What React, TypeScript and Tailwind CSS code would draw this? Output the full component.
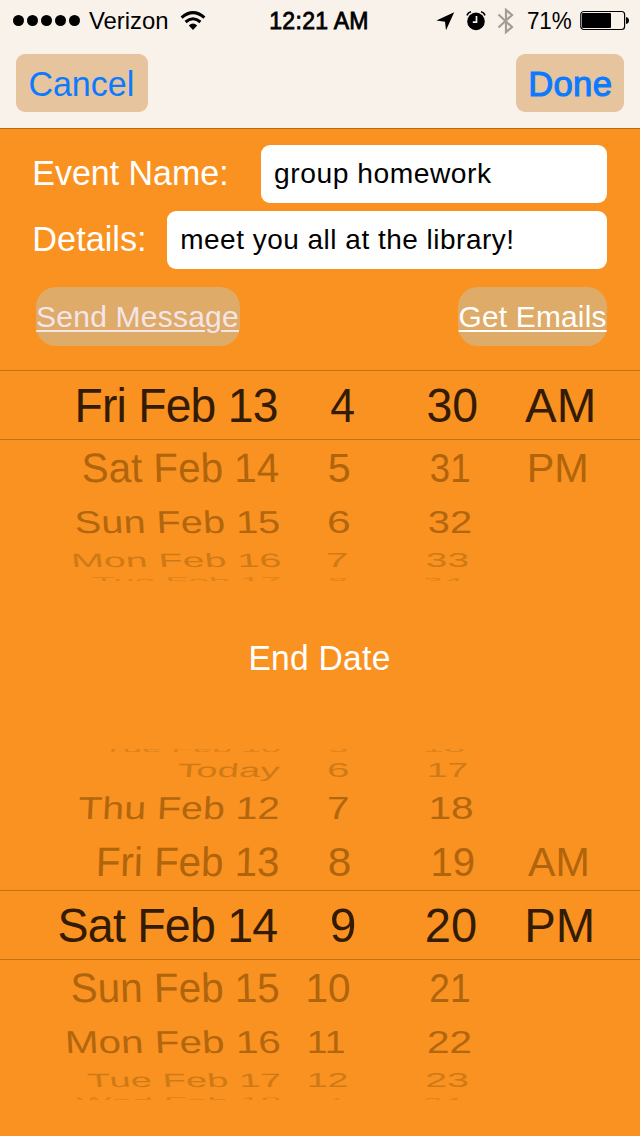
import React from 'react';

type FitProps = {
  text: string;
  width: number;
  size: number;
  scaleY?: number;
  skew?: number;
  tracking?: number;
  className?: string;
};

type Cell = [text: string, left: number, width: number];

type WheelRow = { depth: number; cells: Cell[] };

const FAMILY = '"Liberation Sans", Arial, sans-serif';

// Measuring at a larger size avoids whole-pixel rounding of the glyph bounds
const MEASURE = 10;

const ctx = document.createElement('canvas').getContext('2d')!;

// Condenses or widens a line of text so its glyphs span exactly `width`
function Fit({ text, width, size, scaleY = 1, skew = 0, tracking = 0, className = '' }: FitProps) {
  ctx.font = `${size * MEASURE}px ${FAMILY}`;
  ctx.letterSpacing = `${tracking * MEASURE}px`;
  const m = ctx.measureText(text);
  const inkLeft = m.actualBoundingBoxLeft / MEASURE;
  const inkRight = m.actualBoundingBoxRight / MEASURE;
  const sx = width / (inkLeft + inkRight);
  return (
    <span className="block shrink-0 whitespace-nowrap" style={{ width }}>
      <span
        className={`block w-max origin-left ${className}`}
        style={{
          fontSize: size,
          letterSpacing: tracking,
          transform: `translateX(${inkLeft * sx}px) skewX(${skew}deg) scale(${sx}, ${scaleY})`,
        }}
      >
        {text}
      </span>
    </span>
  );
}

// Appearance by distance from the selected row
const depths = [
  { height: 'h-[69px] leading-[71px]', color: 'text-[#341b03]', scaleY: 1, skew: 0 },
  { height: 'h-[58px] leading-[58px]', color: 'text-[#b0650c]', scaleY: 0.85, skew: 1.5 },
  { height: 'h-[50px] leading-[50px]', color: 'text-[#b2670e]', scaleY: 0.65, skew: 3 },
  { height: 'h-[26px] leading-[26px]', color: 'text-[#d07a16]', scaleY: 0.4, skew: 6 },
  { height: 'h-[16px] leading-[16px]', color: 'text-[#de831b]', scaleY: 0.2, skew: 8 },
];

const startRows: WheelRow[] = [
  { depth: 0, cells: [['Fri Feb 13', 77.5, 198.5], ['4', 331, 23], ['30', 427.5, 49], ['AM', 524.5, 68]] },
  { depth: 1, cells: [['Sat Feb 14', 83, 195], ['5', 328.5, 20], ['31', 431, 38], ['PM', 530, 56]] },
  { depth: 2, cells: [['Sun Feb 15', 76, 202.5], ['6', 328.5, 20], ['32', 429, 41.5]] },
  { depth: 3, cells: [['Mon Feb 16', 74, 205.5], ['7', 328, 19], ['33', 426.5, 40.5]] },
  { depth: 4, cells: [['Tue Feb 17', 93, 187], ['8', 328.5, 18], ['34', 424, 38]] },
];

const endRows: WheelRow[] = [
  { depth: -4, cells: [['Tue Feb 10', 103, 177], ['5', 328.5, 18], ['16', 425, 38.5]] },
  { depth: -3, cells: [['Today', 178, 101.5], ['6', 328.5, 19], ['17', 428.5, 38]] },
  { depth: -2, cells: [['Thu Feb 12', 78.5, 199], ['7', 328.5, 19], ['18', 431, 41]] },
  { depth: -1, cells: [['Fri Feb 13', 99, 179], ['8', 328.5, 20.5], ['19', 433, 40.5], ['AM', 527.5, 59]] },
  { depth: 0, cells: [['Sat Feb 14', 58.5, 218], ['9', 331.5, 22.5], ['20', 427, 49], ['PM', 528, 64]] },
  { depth: 1, cells: [['Sun Feb 15', 72, 206], ['10', 307.5, 41.5], ['21', 431, 38]] },
  { depth: 2, cells: [['Mon Feb 16', 67.5, 211], ['11', 308.5, 35], ['22', 429, 41.5]] },
  { depth: 3, cells: [['Tue Feb 17', 87.5, 192], ['12', 308.5, 38], ['23', 426.5, 40.5]] },
  { depth: 4, cells: [['Wed Feb 18', 76, 204], ['1', 333, 9], ['24', 424, 37]] },
];

function Wheel({ rows, className }: { rows: WheelRow[]; className: string }) {
  return (
    <div className={`flex shrink-0 flex-col overflow-hidden ${className}`}>
      {rows.map(({ depth, cells }) => {
        const look = depths[Math.abs(depth)];
        let edge = 0;
        return (
          <div
            key={depth}
            className={`flex shrink-0 ${look.height} ${look.color} ${depth < 0 ? 'translate-y-px' : ''} ${depth === 0 ? 'shadow-[inset_0_1px_0_#c6720f,0_1px_0_#c6720f]' : ''}`}
          >
            {cells.map(([text, left, width], i) => {
              const gap = left - edge;
              edge = left + width;
              return (
                <div key={i} style={{ marginLeft: gap }}>
                  <Fit
                    text={text}
                    width={width}
                    size={48.5}
                    scaleY={look.scaleY}
                    skew={i === 0 ? Math.sign(depth) * look.skew : 0}
                    tracking={depth === 0 && i === 0 ? -0.8 : 0}
                  />
                </div>
              );
            })}
          </div>
        );
      })}
    </div>
  );
}

function StatusBar() {
  return (
    <div className="flex h-[41px] items-center pl-[13px] leading-[41px]">
      <div className="flex gap-[3px]">
        {[0, 1, 2, 3, 4].map(i => (
          <span key={i} className="size-[11px] rounded-full bg-black" />
        ))}
      </div>
      <div className="ml-[9px]">
        <Fit text="Verizon" width={78} size={24} />
      </div>
      <svg className="ml-[13px] shrink-0" width="26" height="20" viewBox="0 0 26 20" fill="none" stroke="#000">
        <path d="M1.6 6.6Q13 -3.4 24.4 6.6" strokeWidth="3" />
        <path d="M5.6 11Q13 4.6 20.4 11" strokeWidth="3" />
        <path d="M8.8 14.4Q13 10.8 17.2 14.4L13 19Z" fill="#000" stroke="none" />
      </svg>
      <div className="ml-[65px]">
        <Fit text="12:21 AM" width={97} size={24} tracking={0.3} className="[-webkit-text-stroke:0.8px_black]" />
      </div>
      <svg className="ml-[68px] shrink-0" width="19" height="20" viewBox="0 0 19 20">
        <path d="M18.2 1.2L0.4 9.6L9 10.8L10 19.3Z" />
      </svg>
      <svg className="ml-[11px] shrink-0" width="20" height="22" viewBox="0 0 20 22" fill="none">
        <circle cx="10" cy="11.4" r="8.8" fill="#000" />
        <path d="M0.9 5.4Q2.2 2.4 5 1.8M19.1 5.4Q17.8 2.4 15 1.8" stroke="#000" strokeWidth="1.6" />
        <path d="M10.5 6V12.2H6.8" stroke="#f9f2eb" strokeWidth="1.7" />
      </svg>
      <svg className="ml-[11px] shrink-0" width="18" height="28" viewBox="0 0 18 28" fill="none" stroke="#a39d97" strokeWidth="2.2">
        <path d="M1.5 7.5L15 20L9 25.2V2.8L15 8L1.5 20.5" />
      </svg>
      <div className="ml-[13px]">
        <Fit text="71%" width={43} size={24} />
      </div>
      <svg className="ml-[9px] shrink-0" width="50" height="21" viewBox="0 0 50 21">
        <rect x="0.8" y="1.5" width="43.8" height="18" rx="3" fill="none" stroke="#000" strokeWidth="1.2" />
        <rect x="2" y="3" width="29" height="15" rx="1" />
        <path d="M46 7Q49 7.5 49 10.5Q49 13.5 46 14Z" />
      </svg>
    </div>
  );
}

export default function App() {
  return (
    <div className="flex h-[1136px] w-[640px] flex-col overflow-hidden bg-[#fa9221] font-['Liberation_Sans',Arial,sans-serif]">
      {/* Navigation bar */}
      <header className="h-[129px] shrink-0 border-b border-[#b96a12] bg-[#f9f2eb] text-black">
        <StatusBar />
        <div className="mt-[13px] flex justify-between px-4 leading-[61px] text-[#0b7aff]">
          <button className="flex h-[58px] w-[132px] rounded-[9px] bg-[#e6c49e] pl-[13.5px]">
            <Fit text="Cancel" width={102} size={34.5} />
          </button>
          <button className="flex h-[58px] w-[108px] rounded-[9px] bg-[#e6c49e] pl-[14.5px]">
            <Fit text="Done" width={79.5} size={34.5} tracking={0.3} className="[-webkit-text-stroke:1.1px_#0b7aff]" />
          </button>
        </div>
      </header>

      {/* Event form */}
      <section className="flex h-[241px] shrink-0 flex-col pt-4 pr-[33px] pl-[34.5px]">
        <div className="flex h-[58px] justify-between text-white">
          <div className="leading-[56px]">
            <Fit text="Event Name:" width={190.5} size={34.5} />
          </div>
          <div className="flex h-[58px] w-[346px] rounded-[9px] bg-white pl-[14px] leading-[58px] text-black">
            <Fit text="group homework" width={216.5} size={27.5} tracking={0.5} />
          </div>
        </div>
        <div className="mt-2 flex h-[58px] justify-between text-white">
          <div className="leading-[56px]">
            <Fit text="Details:" width={108.5} size={34.5} />
          </div>
          <div className="flex h-[58px] w-[440px] rounded-[9px] bg-white pl-[14.5px] leading-[58px] text-black">
            <Fit text="meet you all at the library!" width={329.5} size={27.5} tracking={0.5} />
          </div>
        </div>
        <div className="mt-[18px] flex justify-between pl-[1.5px] leading-[60px] underline-offset-[3px]">
          <button className="flex h-[59px] w-[204px] rounded-[20px] bg-[#dfab69] pl-[1px] text-[#f3e5e8]">
            <Fit text="Send Message" width={200.5} size={29.5} tracking={0.2} className="underline decoration-2" />
          </button>
          <button className="flex h-[59px] w-[149px] justify-center rounded-[20px] bg-[#dfab69] text-white">
            <Fit text="Get Emails" width={145.5} size={29.5} tracking={0.2} className="underline decoration-2" />
          </button>
        </div>
      </section>

      {/* Start date */}
      <Wheel rows={startRows} className="h-[211px]" />

      <div className="flex h-[168px] shrink-0 justify-center pt-[48px] leading-[58px] text-white">
        <Fit text="End Date" width={138} size={34.5} tracking={0.3} />
      </div>

      {/* End date */}
      <Wheel rows={endRows} className="h-[351px] justify-center" />
    </div>
  );
}
